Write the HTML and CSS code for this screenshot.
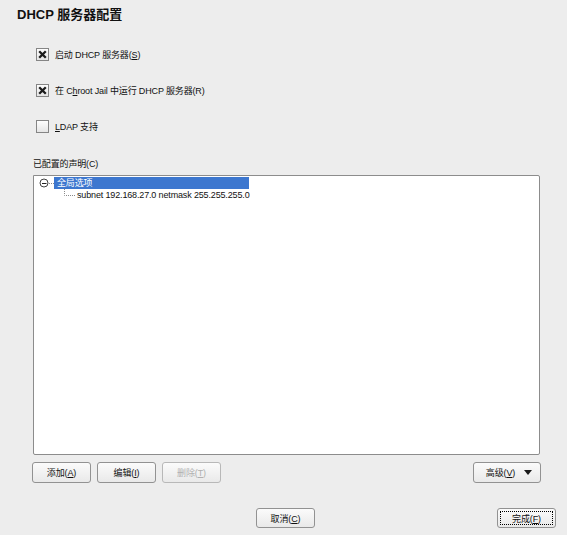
FILE: index.html
```html
<!DOCTYPE html>
<html lang="zh">
<head>
<meta charset="utf-8">
<title>DHCP 服务器配置</title>
<link rel="stylesheet" href="styles.css">
</head>
<body>
<div class="dialog">
  <h1 class="title">DHCP 服务器配置</h1>

  <div class="options">
    <div class="check">
      <svg class="box" width="13" height="13" viewBox="0 0 13 13"><defs><linearGradient id="cg" x1="0" y1="0" x2="0" y2="1"><stop offset="0" stop-color="#ffffff"/><stop offset="1" stop-color="#e4e4e4"/></linearGradient></defs><rect x="0.5" y="0.5" width="12" height="12" fill="url(#cg)" stroke="#858585"/><path d="M3.2 3.2 L9.8 9.8 M9.8 3.2 L3.2 9.8" stroke="#1c1c1c" stroke-width="2.3"/></svg>
      <span>启动 DHCP 服务器(<u>S</u>)</span>
    </div>
    <div class="check">
      <svg class="box" width="13" height="13" viewBox="0 0 13 13"><rect x="0.5" y="0.5" width="12" height="12" fill="url(#cg)" stroke="#858585"/><path d="M3.2 3.2 L9.8 9.8 M9.8 3.2 L3.2 9.8" stroke="#1c1c1c" stroke-width="2.3"/></svg>
      <span>在 C<u>h</u>root Jail 中运行 DHCP 服务器(R)</span>
    </div>
    <div class="check">
      <svg class="box" width="13" height="13" viewBox="0 0 13 13"><rect x="0.5" y="0.5" width="12" height="12" fill="url(#cg)" stroke="#858585"/></svg>
      <span><u>L</u>DAP 支持</span>
    </div>
  </div>

  <div class="section-label">已配置的声明(C)</div>

  <div class="tree">
    <div class="row">
      <svg class="expander" width="15" height="12" viewBox="0 0 15 12"><circle cx="5" cy="6" r="4" fill="#fff" stroke="#444"/><path d="M3 6.5 H7.5" stroke="#222" stroke-width="1"/><path d="M10 6.5 H15" stroke="#8a8a8a" stroke-dasharray="1 1"/></svg>
      <span class="node selected">全局选项</span>
    </div>
    <div class="row child">
      <span class="indent"></span>
      <svg class="connector" width="13" height="12" viewBox="0 0 13 12"><path d="M1.5 0 V6.5 H12" fill="none" stroke="#8a8a8a" stroke-dasharray="1 1"/></svg>
      <span class="node">subnet 192.168.27.0 netmask 255.255.255.0</span>
    </div>
  </div>

  <div class="btnrow">
    <div class="btngroup">
      <button class="btn"><span>添加(<u>A</u>)</span></button>
      <button class="btn"><span>编辑(<u>I</u>)</span></button>
      <button class="btn" disabled><span>删除(<u>T</u>)</span></button>
    </div>
    <button class="btn wide"><span>高级(<u>V</u>)</span><svg class="arrow" width="8" height="5" viewBox="0 0 8 5"><path d="M0 0 H8 L4 5 Z" fill="#1a1a1a"/></svg></button>
  </div>

  <div class="footer">
    <span></span>
    <button class="btn"><span>取消(<u>C</u>)</span></button>
    <button class="btn focus"><span>完成(<u>F</u>)</span></button>
  </div>
</div>
</body>
</html>
```
FILE: styles.css
```css
html, body {
  margin: 0;
  padding: 0;
  background: #ededed;
}
body {
  font-family: "Liberation Sans", "Noto Sans CJK SC", sans-serif;
  font-size: 9px;
  letter-spacing: -0.15px;
  color: #111;
}
.dialog {
  width: 567px;
  height: 535px;
  box-sizing: border-box;
  padding-top: 7px;
  display: flex;
  flex-direction: column;
}
.title {
  margin: 0 0 0 17px;
  font-size: 13px;
  line-height: 15px;
  font-weight: bold;
  letter-spacing: 0;
  color: #111;
}
.options {
  margin-top: 26px;
  padding-left: 36px;
  display: flex;
  flex-direction: column;
  gap: 23px;
}
.check {
  display: flex;
  align-items: center;
  height: 13px;
  gap: 6px;
}
.check span {
  line-height: 12px;
}
u {
  text-decoration: underline;
  text-underline-offset: 1px;
}
.section-label {
  margin: 25px 0 0 33px;
  line-height: 12px;
  height: 12px;
}
.tree {
  margin: 5px 0 0 33px;
  width: 507px;
  height: 280px;
  box-sizing: border-box;
  border: 1px solid #8c8c8c;
  border-radius: 0 2px 2px 2px;
  background: #fff;
  padding: 1px 0 0 5px;
  display: flex;
  flex-direction: column;
}
.row {
  display: flex;
  align-items: center;
  height: 12px;
}
.row svg {
  display: block;
}
.node {
  line-height: 12px;
  height: 12px;
  white-space: nowrap;
}
.selected {
  background: #3d77cf;
  color: #fff;
  width: 192px;
  padding-left: 3px;
}
.child .indent {
  width: 24px;
}
.child .node {
  margin-left: 1px;
}
.btnrow {
  margin: 7px 26px 0 32px;
  display: flex;
  justify-content: space-between;
}
.btngroup {
  display: flex;
  gap: 6px;
}
.btn {
  width: 59px;
  height: 21px;
  box-sizing: border-box;
  border: 1px solid #929292;
  border-radius: 3px;
  background: linear-gradient(#fbfbfb, #e9e9e9);
  font-family: "Liberation Sans", "Noto Sans CJK SC", sans-serif;
  font-size: 9px;
  letter-spacing: -0.15px;
  color: #111;
  padding: 0;
  display: flex;
  align-items: center;
  justify-content: center;
}
.btn span {
  white-space: nowrap;
}
.btn:disabled {
  color: #b0b0b0;
  border-color: #b8b8b8;
}
.btn.wide {
  width: 68px;
  gap: 9px;
  padding-left: 4px;
}
.arrow {
  display: block;
}
.footer {
  margin-top: 25px;
  padding: 0 11px 0 15px;
  display: grid;
  grid-template-columns: 1fr auto 1fr;
  align-items: center;
}
.footer .btn {
  height: 20px;
}
.footer .focus {
  justify-self: end;
  outline: 1px dotted #000;
  outline-offset: -4px;
}
```
